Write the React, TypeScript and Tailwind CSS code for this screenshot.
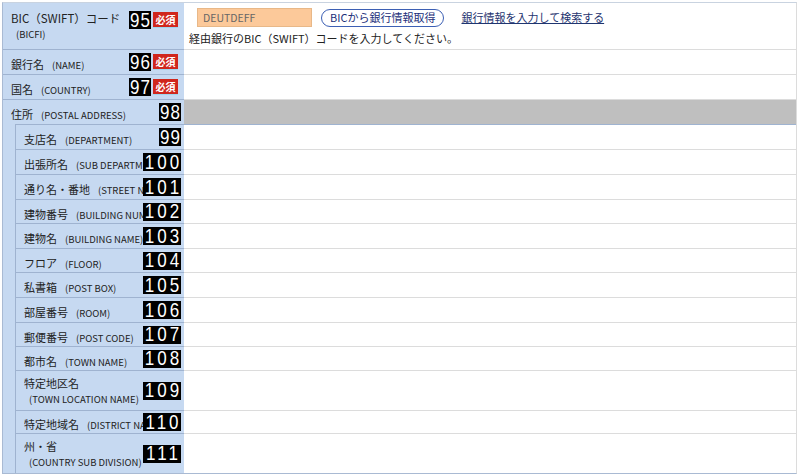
import React from 'react'

function NumBadge({ n }: { n: string }) {
  const wide = n.length > 2
  return (
    <span
      className={`inline-flex items-center justify-center h-[18px] bg-black text-white text-[17px] leading-none font-['Liberation_Sans',sans-serif] ${wide ? 'w-[38px] tracking-[3px] pl-[3px]' : 'w-[22px] tracking-[1px] pl-[1px]'}`}
    >
      <span className="inline-block scale-y-[1.15]">{n}</span>
    </span>
  )
}

function Required() {
  return (
    <span className="inline-flex items-center justify-center w-[25px] h-[16px] bg-[#d0261c] text-white text-[10px] font-bold leading-none border-b border-[#9fd6ee]">
      必須
    </span>
  )
}

type Row = { num: string; ja: string; en: string; h: string; twoLine?: boolean }

const nested: Row[] = [
  { num: '99', ja: '支店名', en: '(DEPARTMENT)', h: 'h-[25px]' },
  { num: '100', ja: '出張所名', en: '(SUB DEPARTMENT)', h: 'h-[25px]' },
  { num: '101', ja: '通り名・番地', en: '(STREET NAME)', h: 'h-[25px]' },
  { num: '102', ja: '建物番号', en: '(BUILDING NUMBER)', h: 'h-[24px]' },
  { num: '103', ja: '建物名', en: '(BUILDING NAME)', h: 'h-[25px]' },
  { num: '104', ja: 'フロア', en: '(FLOOR)', h: 'h-[24px]' },
  { num: '105', ja: '私書箱', en: '(POST BOX)', h: 'h-[25px]' },
  { num: '106', ja: '部屋番号', en: '(ROOM)', h: 'h-[25px]' },
  { num: '107', ja: '郵便番号', en: '(POST CODE)', h: 'h-[24px]' },
  { num: '108', ja: '都市名', en: '(TOWN NAME)', h: 'h-[24px]' },
  { num: '109', ja: '特定地区名', en: '(TOWN LOCATION NAME)', h: 'h-[40px]', twoLine: true },
  { num: '110', ja: '特定地域名', en: '(DISTRICT NAME)', h: 'h-[23px]' },
  { num: '111', ja: '州・省', en: '(COUNTRY SUB DIVISION)', h: 'h-[39px]', twoLine: true },
]

function Label({ ja, en, twoLine }: { ja: string; en: string; twoLine?: boolean }) {
  if (twoLine) {
    return (
      <div className="min-w-0 flex flex-col leading-[14px] whitespace-nowrap overflow-hidden">
        <span className="text-[11px]">{ja}</span>
        <span className="text-[9.5px] pl-[5px] mt-[2px]">{en}</span>
      </div>
    )
  }
  return (
    <div className="min-w-0 whitespace-nowrap overflow-hidden">
      <span className="text-[11px]">{ja}</span>
      <span className="text-[9.5px] ml-[8px]">{en}</span>
    </div>
  )
}

function TopRow({ num, ja, en }: { num: string; ja: string; en: string }) {
  return (
    <div className="flex h-[25px]">
      <div className="relative w-[181px] shrink-0 bg-[#c6d9f1] pl-[8px] pr-[56px] flex items-center border-b border-[#9fb3d0]">
        <Label ja={ja} en={en} />
        <div className="absolute right-[6px] top-[3px] flex items-center gap-[2px]">
          <NumBadge n={num} />
          <Required />
        </div>
      </div>
      <div className="flex-1 border-b border-[#dcdcdc]" />
    </div>
  )
}

export default function App() {
  return (
    <div className="w-[800px] h-[476px] bg-white text-[#222] pt-[2px] pl-[2px] font-['Noto_Sans_CJK_JP','Liberation_Sans',sans-serif]">
      <div className="w-[795px] border border-l-[#a9bad3] border-t-[#c9d3e0] border-r-[#dcdcdc] border-b-[#a9bad3]">
        {/* BIC row */}
        <div className="flex h-[47px]">
          <div className="relative w-[181px] shrink-0 bg-[#c6d9f1] pl-[8px] pt-[7px] border-b border-[#9fb3d0]">
            <div className="text-[11.5px] leading-[16px]">BIC（SWIFT）コード</div>
            <div className="text-[9.5px] leading-[14px] pl-[5px] mt-[1px]">(BICFI)</div>
            <div className="absolute right-[6px] top-[8px] flex items-center gap-[2px]">
              <NumBadge n="95" />
              <Required />
            </div>
          </div>
          <div className="flex-1 bg-white pl-[8px] pt-[5px] border-b border-[#dcdcdc]">
            <div className="flex items-center h-[19px]">
              <div className="w-[115px] h-[19px] ml-[5px] bg-[#fcc99a] border border-[#e8b888] text-[10.5px] text-[#666] leading-[17px] pl-[5px]">
                DEUTDEFF
              </div>
              <button className="ml-[9px] h-[18px] px-[8px] rounded-full border border-[#3c5fb4] text-[11px] leading-[15px] text-[#1c2f7a] bg-white">
                BICから銀行情報取得
              </button>
              <a className="ml-[17px] text-[11px] text-[#1f3570] underline">銀行情報を入力して検索する</a>
            </div>
            <div className="text-[11px] leading-[16px] mt-[3px] -ml-[3px]">経由銀行のBIC（SWIFT）コードを入力してください。</div>
          </div>
        </div>

        <TopRow num="96" ja="銀行名" en="(NAME)" />
        <TopRow num="97" ja="国名" en="(COUNTRY)" />

        {/* POSTAL ADDRESS */}
        <div className="flex h-[24px]">
          <div className="relative w-[181px] shrink-0 bg-[#c6d9f1] pl-[8px] pr-[25px] flex items-center">
            <Label ja="住所" en="(POSTAL ADDRESS)" />
            <div className="absolute right-[3px] top-[3px] flex">
              <NumBadge n="98" />
            </div>
          </div>
          <div className="flex-1 bg-[#bfbfbf]" />
        </div>

        {/* nested address rows */}
        <div className="flex">
          <div className="w-[12px] shrink-0 bg-[#c6d9f1]" />
          <div className="flex-1 border-t border-[#9fb3d0]">
            {nested.map((r, i) => (
              <div key={r.num} className={`flex ${r.h}`}>
                <div
                  className={`relative w-[169px] shrink-0 bg-[#c6d9f1] pl-[8px] flex items-center border-l border-[#9fb3d0] ${r.num.length > 2 ? 'pr-[41px]' : 'pr-[25px]'} ${i < nested.length - 1 ? 'border-b' : ''} border-b-[#9fb3d0]`}
                >
                  <Label ja={r.ja} en={r.en} twoLine={r.twoLine} />
                  <div className="absolute right-[3px] top-1/2 -translate-y-1/2 flex">
                    <NumBadge n={r.num} />
                  </div>
                </div>
                <div className={`flex-1 ${i < nested.length - 1 ? 'border-b border-[#dcdcdc]' : ''}`} />
              </div>
            ))}
          </div>
        </div>
      </div>
    </div>
  )
}
